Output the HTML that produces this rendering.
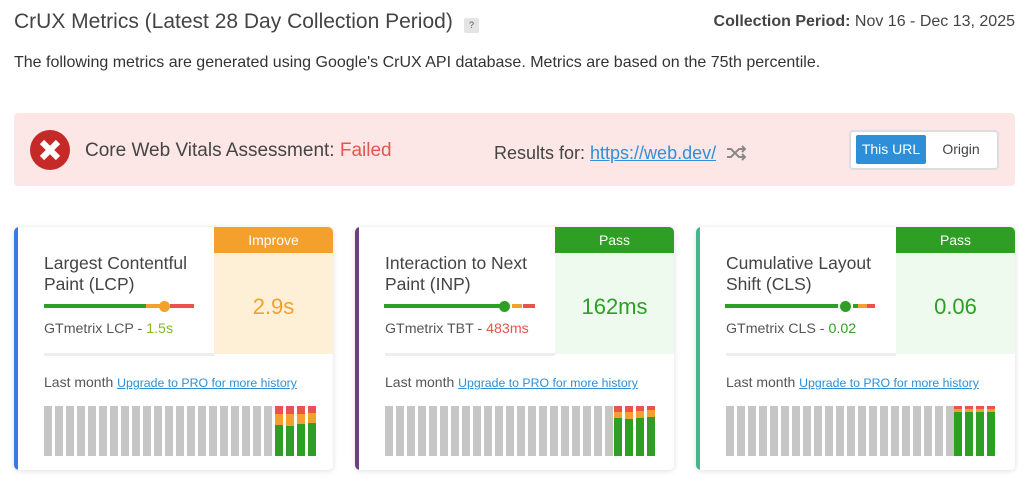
<!DOCTYPE html>
<html><head><style>
*{margin:0;padding:0;box-sizing:border-box}
body{width:1031px;height:486px;background:#fff;font-family:"Liberation Sans",sans-serif;color:#444;position:relative;overflow:hidden}
.a{position:absolute}
.card{position:absolute;top:227px;width:319px;height:243px;background:#fff;border-radius:5px;box-shadow:0 1px 6px rgba(0,0,0,.13);overflow:hidden}
.lb{position:absolute;left:0;top:0;bottom:0;width:4px}
.title{position:absolute;left:30px;top:26px;font-size:17.5px;line-height:21px;color:#444;width:170px}
.rp{position:absolute;left:200px;top:0;width:119px;height:127px}
.rh{height:26px;color:#fff;font-size:14px;text-align:center;line-height:26px}
.val{text-align:center;font-size:22px;margin-top:41px}
.div{position:absolute;left:30px;top:126px;width:170px;height:3px;background:#eee}
.gt{position:absolute;left:30px;top:94px;font-size:14.2px;color:#555}
.lm{position:absolute;left:30px;top:147px;font-size:14px;color:#555}
.lm a{color:#2d8fd8;text-decoration:underline;font-size:12.3px}
.gray{position:absolute;left:30px;top:179px;width:228px;height:50px;background:repeating-linear-gradient(90deg,#c6c6c6 0 8px,transparent 8px 11px)}
.b{position:absolute;width:8px;bottom:14px;display:flex;flex-direction:column}
.seg{position:absolute;height:4px;top:77px}
.dot{position:absolute;width:11px;height:11px;border-radius:50%;top:73.5px}
</style></head><body>
<div class="a" style="left:14px;top:10px;font-size:21px;color:#444">CrUX Metrics (Latest 28 Day Collection Period)</div>
<div class="a" style="left:464px;top:18px;width:15px;height:15px;background:#e4e4e4;border-radius:2px;font-size:9px;text-align:center;line-height:15px;color:#555">?</div>
<div class="a" style="right:16px;top:13px;font-size:16px;color:#444"><b>Collection Period:</b> Nov 16 - Dec 13, 2025</div>
<div class="a" style="left:14px;top:54px;font-size:16px;color:#333">The following metrics are generated using Google's CrUX API database. Metrics are based on the 75th percentile.</div>

<div class="a" style="left:14px;top:113px;width:1001px;height:73px;background:#fde7e6;border-radius:4px"></div>
<svg class="a" style="left:29px;top:129px" width="42" height="42" viewBox="0 0 42 42"><circle cx="21" cy="21" r="20" fill="#c62a28"/><path d="M13 13L29 29M29 13L13 29" stroke="#fff" stroke-width="6"/></svg>
<div class="a" style="left:85px;top:140px;font-size:19px;color:#444">Core Web Vitals Assessment: <span style="color:#e8534d">Failed</span></div>
<div class="a" style="left:494px;top:143px;font-size:18px;color:#444">Results for: <span style="color:#2d8fd8;text-decoration:underline">https://web.dev/</span></div>
<svg class="a" style="left:726px;top:145px" width="20" height="16" viewBox="0 0 20 16"><path d="M1 4h4l8 8h5M1 12h4l8-8h5" stroke="#888" stroke-width="2" fill="none"/><path d="M16 1l3 3-3 3M16 9l3 3-3 3" stroke="#888" stroke-width="2" fill="none"/></svg>
<div class="a" style="left:849px;top:130px;width:150px;height:40px;background:#fff;border:2px solid #ddd;border-radius:4px"></div>
<div class="a" style="left:856px;top:135px;width:70px;height:29px;background:#2d8fd8;border-radius:2px;color:#fff;font-size:14px;text-align:center;line-height:29px">This URL</div>
<div class="a" style="left:930px;top:135px;width:62px;height:29px;color:#444;font-size:14px;text-align:center;line-height:29px">Origin</div>

<div class="card" style="left:14px">
<div class="lb" style="background:#3b78e7"></div>
<div class="title">Largest Contentful Paint (LCP)</div>
<div class="seg" style="left:30px;width:102px;background:#2e9e24"></div>
<div class="seg" style="left:132px;width:18px;background:#f3a02d"></div>
<div class="seg" style="left:156px;width:24px;background:#e8534d"></div>
<div class="dot" style="left:145px;background:#f3a02d"></div>
<div class="gt">GTmetrix LCP - <span style="color:#7dba2a">1.5s</span></div>
<div class="rp" style="background:#fef0d7"><div class="rh" style="background:#f3a02d">Improve</div><div class="val" style="color:#f3a02d">2.9s</div></div>
<div class="div"></div>
<div class="lm">Last month <a>Upgrade to PRO for more history</a></div>
<div class="gray"></div>
<div class="b" style="left:261px;height:50px"><div style="height:8px;background:#e8534d"></div><div style="height:11px;background:#f3a02d"></div><div style="flex:1;background:#2e9e24"></div></div>
<div class="b" style="left:272px;height:50px"><div style="height:8px;background:#e8534d"></div><div style="height:12px;background:#f3a02d"></div><div style="flex:1;background:#2e9e24"></div></div>
<div class="b" style="left:283px;height:50px"><div style="height:8px;background:#e8534d"></div><div style="height:10px;background:#f3a02d"></div><div style="flex:1;background:#2e9e24"></div></div>
<div class="b" style="left:294px;height:50px"><div style="height:7px;background:#e8534d"></div><div style="height:10px;background:#f3a02d"></div><div style="flex:1;background:#2e9e24"></div></div>
</div>

<div class="card" style="left:355px">
<div class="lb" style="background:#6b3f7c"></div>
<div class="title">Interaction to Next Paint (INP)</div>
<div class="seg" style="left:29px;width:117px;background:#2e9e24"></div>
<div class="seg" style="left:157px;width:10px;background:#f3a02d"></div>
<div class="seg" style="left:168px;width:12px;background:#e8534d"></div>
<div class="dot" style="left:144px;background:#2e9e24"></div>
<div class="gt">GTmetrix TBT - <span style="color:#e8534d">483ms</span></div>
<div class="rp" style="background:#eefaee"><div class="rh" style="background:#2e9e24">Pass</div><div class="val" style="color:#2e9e24">162ms</div></div>
<div class="div"></div>
<div class="lm">Last month <a>Upgrade to PRO for more history</a></div>
<div class="gray"></div>
<div class="b" style="left:259px;height:50px"><div style="height:6px;background:#e8534d"></div><div style="height:6px;background:#f3a02d"></div><div style="flex:1;background:#2e9e24"></div></div>
<div class="b" style="left:270px;height:50px"><div style="height:6px;background:#e8534d"></div><div style="height:7px;background:#f3a02d"></div><div style="flex:1;background:#2e9e24"></div></div>
<div class="b" style="left:281px;height:50px"><div style="height:5px;background:#e8534d"></div><div style="height:7px;background:#f3a02d"></div><div style="flex:1;background:#2e9e24"></div></div>
<div class="b" style="left:292px;height:50px"><div style="height:4px;background:#e8534d"></div><div style="height:7px;background:#f3a02d"></div><div style="flex:1;background:#2e9e24"></div></div>
</div>

<div class="card" style="left:696px">
<div class="lb" style="background:#45b58e"></div>
<div class="title">Cumulative Layout Shift (CLS)</div>
<div class="seg" style="left:29px;width:113px;background:#2e9e24"></div>
<div class="seg" style="left:157px;width:5px;background:#2e9e24"></div>
<div class="seg" style="left:162px;width:9px;background:#f3a02d"></div>
<div class="seg" style="left:171px;width:8px;background:#e8534d"></div>
<div class="dot" style="left:144px;background:#2e9e24"></div>
<div class="gt">GTmetrix CLS - <span style="color:#2e9e24">0.02</span></div>
<div class="rp" style="background:#eefaee"><div class="rh" style="background:#2e9e24">Pass</div><div class="val" style="color:#2e9e24">0.06</div></div>
<div class="div"></div>
<div class="lm">Last month <a>Upgrade to PRO for more history</a></div>
<div class="gray"></div>
<div class="b" style="left:258px;height:50px"><div style="height:3px;background:#e8534d"></div><div style="height:3px;background:#f3a02d"></div><div style="flex:1;background:#2e9e24"></div></div>
<div class="b" style="left:269px;height:50px"><div style="height:3px;background:#e8534d"></div><div style="height:3px;background:#f3a02d"></div><div style="flex:1;background:#2e9e24"></div></div>
<div class="b" style="left:280px;height:50px"><div style="height:3px;background:#e8534d"></div><div style="height:3px;background:#f3a02d"></div><div style="flex:1;background:#2e9e24"></div></div>
<div class="b" style="left:291px;height:50px"><div style="height:3px;background:#e8534d"></div><div style="height:3px;background:#f3a02d"></div><div style="flex:1;background:#2e9e24"></div></div>
</div>
</body></html>
